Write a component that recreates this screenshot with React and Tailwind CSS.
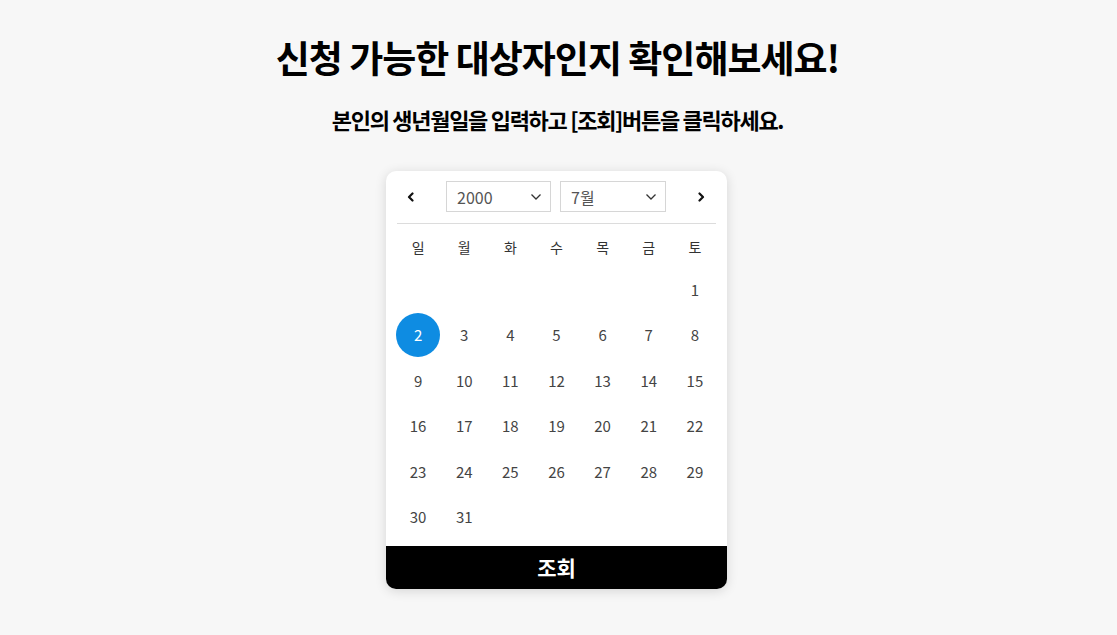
import { useState } from "react";

const WEEKDAYS = ["일", "월", "화", "수", "목", "금", "토"];

// July 2000 starts on a Saturday
function buildDays(year, month) {
  const first = new Date(year, month - 1, 1).getDay();
  const total = new Date(year, month, 0).getDate();
  const cells = [];
  for (let i = 0; i < first; i++) cells.push(null);
  for (let d = 1; d <= total; d++) cells.push(d);
  return cells;
}

function Chevron({ dir = "left" }) {
  return (
    <svg width="10" height="10" viewBox="0 0 10 10" fill="none">
      <path
        d={dir === "left" ? "M6.5 1.5L3 5l3.5 3.5" : "M3.5 1.5L7 5 3.5 8.5"}
        stroke="#111"
        strokeWidth="2.2"
        strokeLinecap="round"
        strokeLinejoin="round"
      />
    </svg>
  );
}

function SelectBox({ value, width }) {
  return (
    <div
      className={`${width} flex h-[31px] items-center justify-between border border-[#d6d6d6] bg-white pl-[10px] pr-[8px] text-[16px] text-[#555]`}
    >
      <span>{value}</span>
      <svg width="12" height="8" viewBox="0 0 12 8" fill="none">
        <path d="M1.5 1.5l4.5 4.5 4.5-4.5" stroke="#333" strokeWidth="1.3" />
      </svg>
    </div>
  );
}

export default function App() {
  const [year] = useState(2000);
  const [month] = useState(7);
  const [selected, setSelected] = useState(2);
  const days = buildDays(year, month);

  return (
    <div
      className="flex min-h-[635px] flex-col items-center bg-[#f7f7f7] pt-[35px] pr-[2px]"
      style={{ fontFamily: '"Noto Sans CJK KR", "Noto Sans", sans-serif' }}
    >
      <h1 className="text-[37px] font-bold leading-[44px] tracking-[-1px] text-black">
        신청 가능한 대상자인지 확인해보세요!
      </h1>
      <p className="mt-[26px] text-[22px] font-bold leading-[28px] tracking-[-1.3px] text-black">
        본인의 생년월일을 입력하고 [조회]버튼을 클릭하세요.
      </p>

      <div className="mt-[38px] mr-[2px] w-[341px] overflow-hidden rounded-[10px] bg-white shadow-[0_2px_12px_rgba(0,0,0,0.14)]">
        {/* month navigation */}
        <div className="mx-[11px] flex items-center border-b border-[#dcdcdc] pt-[10px] pb-[11px]">
          <button className="flex h-[31px] w-[28px] items-center justify-center">
            <Chevron dir="left" />
          </button>
          <div className="ml-[21px]">
            <SelectBox value={year} width="w-[105px]" />
          </div>
          <div className="ml-[9px]">
            <SelectBox value={`${month}월`} width="w-[106px]" />
          </div>
          <div className="flex flex-1 justify-end">
            <button className="flex h-[31px] w-[30px] items-center justify-center">
              <Chevron dir="right" />
            </button>
          </div>
        </div>

        {/* day grid */}
        <div className="px-[9px]">
          <div className="grid h-[43px] grid-cols-7 items-center pt-[3px] text-center text-[14px] text-[#333]">
            {WEEKDAYS.map((w) => (
              <span key={w}>{w}</span>
            ))}
          </div>
          <div className="grid grid-cols-7 auto-rows-[45.5px] text-[15px] text-[#444]">
            {days.map((d, i) => (
              <div key={i} className="flex items-center justify-center">
                {d && (
                  <button
                    onClick={() => setSelected(d)}
                    className={`flex h-[44px] w-[44px] items-center justify-center rounded-full ${
                      selected === d ? "bg-[#0e8ce2] text-white" : ""
                    }`}
                  >
                    {d}
                  </button>
                )}
              </div>
            ))}
          </div>
        </div>

        <button className="mt-[6px] flex h-[43px] w-full items-center justify-center bg-black text-[21px] font-bold text-white">
          조회
        </button>
      </div>
    </div>
  );
}
